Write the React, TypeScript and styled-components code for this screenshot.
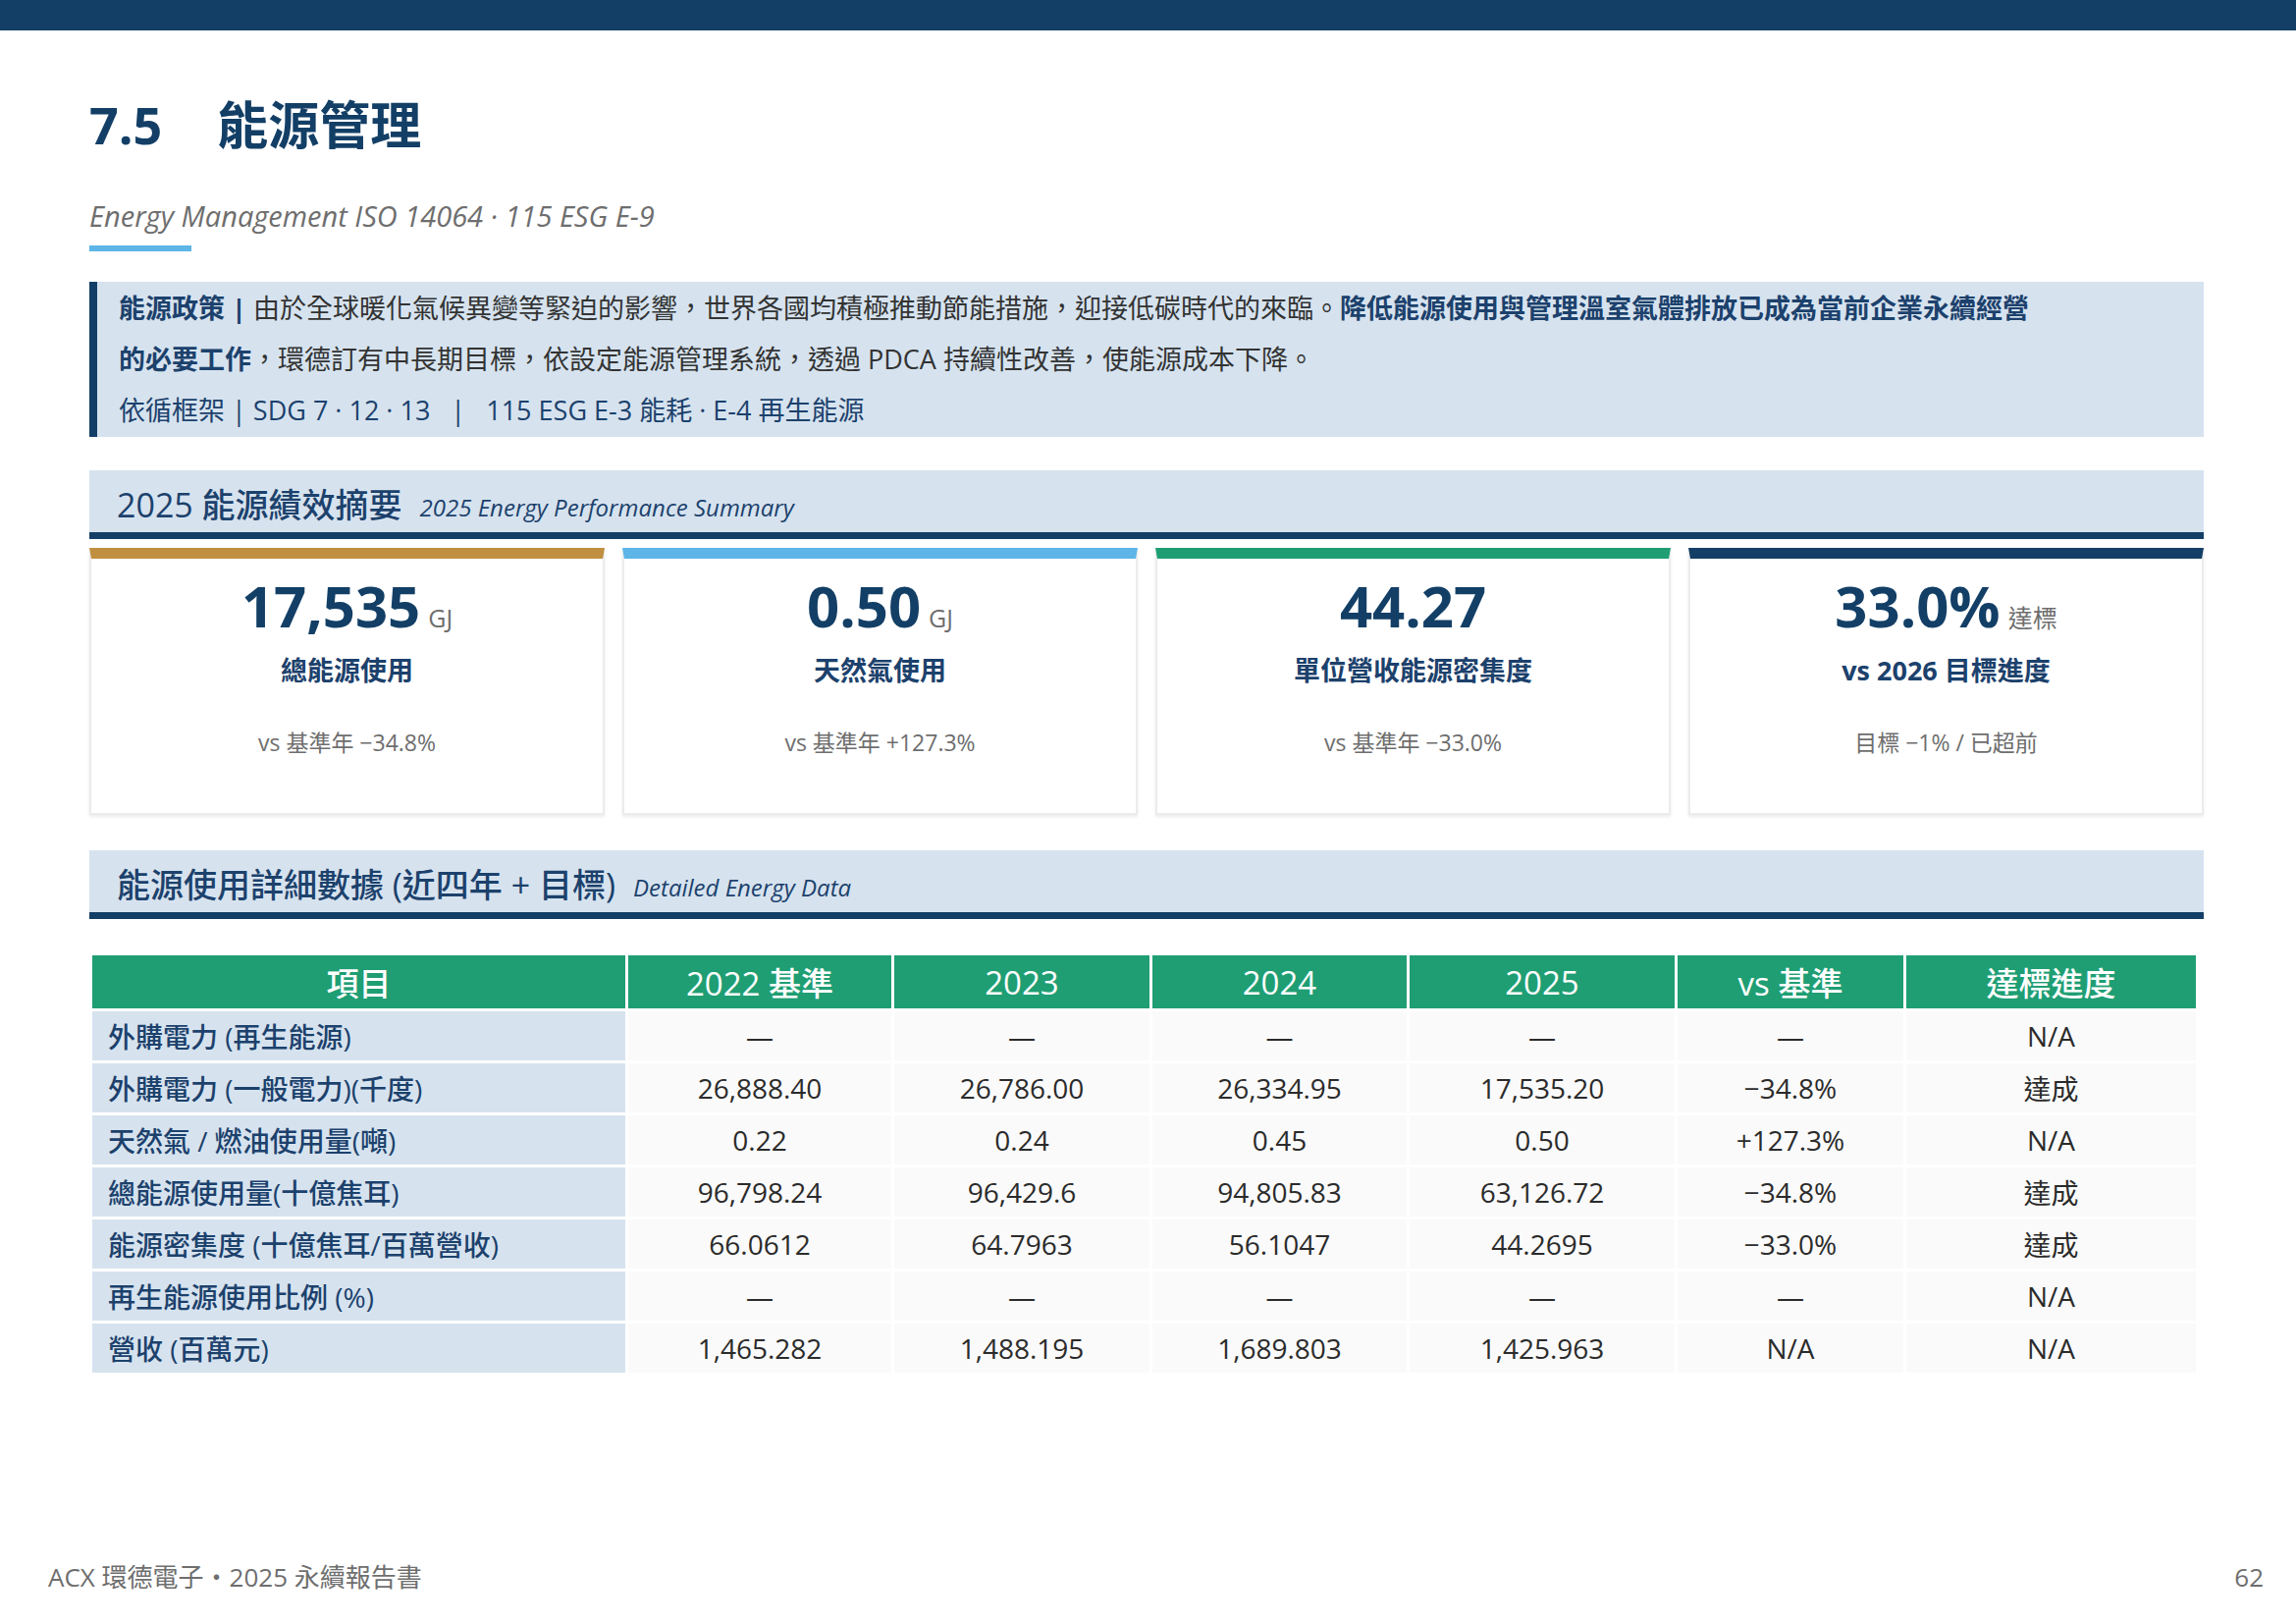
import React from 'react';
import styled, { createGlobalStyle } from 'styled-components';

const Colors = {
    navy: '#133f66',
    navyText: '#1c416c',
    paleBlue: '#d6e3ef',
    green: '#1f9e74',
    sky: '#5db5e8',
    gold: '#c08f3f',
    gray: '#6e6e6e',
    text: '#2b2b2b',
};

const font = `"Open Sans", "Noto Sans CJK TC", sans-serif`;

const GlobalStyle = createGlobalStyle`
    html, body { margin: 0; padding: 0; background: #fff; }
    body { font-family: ${font}; color: ${Colors.text}; }
`;

const Page = styled.div`
    width: 2339px;
    min-height: 1654px;
    display: flex;
    flex-direction: column;
    box-sizing: border-box;
`;

const TopBar = styled.div`
    height: 31px;
    background: ${Colors.navy};
`;

const Content = styled.div`
    padding: 0 94px 0 91px;
    display: flex;
    flex-direction: column;
`;

const Title = styled.h1`
    margin: 65px 0 0;
    font-size: 52px;
    line-height: 62px;
    font-weight: 700;
    color: ${Colors.navy};
    display: flex;
    gap: 56px;
`;

const Subtitle = styled.div`
    margin-top: 44px;
    font-size: 29px;
    line-height: 36px;
    font-style: italic;
    color: ${Colors.gray};
`;

const Accent = styled.div`
    margin-top: 12px;
    width: 104px;
    height: 6px;
    background: ${Colors.sky};
`;

const Policy = styled.div`
    margin-top: 31px;
    background: ${Colors.paleBlue};
    border-left: 8px solid ${Colors.navy};
    padding: 1px 20px 1px 22px;
    font-size: 27px;
    line-height: 52px;
    color: #333;
    white-space: nowrap;
`;

const Strong = styled.span`
    font-weight: 700;
    color: ${Colors.navyText};
`;

const Ref = styled.span`
    color: ${Colors.navyText};
`;

const SectionHead = styled.div<{ $top: number }>`
    margin-top: ${(p) => p.$top}px;
    height: 70px;
    box-sizing: border-box;
    background: ${Colors.paleBlue};
    border-bottom: 7px solid ${Colors.navy};
    display: flex;
    align-items: flex-end;
    gap: 18px;
    padding: 0 0 8px 28px;
    color: ${Colors.navyText};
`;

const SectionTitle = styled.span`
    font-size: 34px;
    line-height: 40px;
    font-weight: 500;
`;

const SectionSub = styled.span`
    font-size: 24px;
    line-height: 34px;
    font-style: italic;
`;

const Cards = styled.div`
    margin-top: 9px;
    display: grid;
    grid-template-columns: repeat(4, 1fr);
    gap: 18px;
`;

const Card = styled.div<{ $accent: string }>`
    height: 272px;
    box-sizing: border-box;
    border: 2px solid #ececec;
    border-top: 11px solid ${(p) => p.$accent};
    box-shadow: 0 2px 3px rgba(0, 0, 0, 0.08);
    display: flex;
    flex-direction: column;
    align-items: center;
    padding-top: 16px;
`;

const Big = styled.div`
    height: 64px;
    display: flex;
    align-items: baseline;
    gap: 8px;
    font-size: 58px;
    line-height: 64px;
    font-weight: 700;
    color: ${Colors.navy};
`;

const Unit = styled.span`
    font-size: 25px;
    line-height: 30px;
    font-weight: 400;
    color: ${Colors.gray};
`;

const CardLabel = styled.div`
    margin-top: 16px;
    font-size: 27px;
    line-height: 36px;
    font-weight: 700;
    color: ${Colors.navyText};
`;

const CardNote = styled.div`
    margin-top: 40px;
    font-size: 23px;
    line-height: 30px;
    color: ${Colors.gray};
`;

const Table = styled.div`
    margin: 37px 0 0 3px;
    width: 2143px;
    display: grid;
    grid-template-columns: 543px 268px 260px 259px 270px 230px 295px;
    column-gap: 3px;
`;

const Th = styled.div`
    height: 54px;
    background: ${Colors.green};
    color: #fff;
    font-size: 33px;
    font-weight: 500;
    display: flex;
    align-items: center;
    justify-content: center;
    margin-bottom: 3px;
`;

const Td = styled.div<{ $first?: boolean }>`
    height: 50px;
    margin-bottom: 3px;
    display: flex;
    align-items: center;
    justify-content: ${(p) => (p.$first ? 'flex-start' : 'center')};
    padding-left: ${(p) => (p.$first ? '16px' : '0')};
    background: ${(p) => (p.$first ? Colors.paleBlue : '#fafafa')};
    color: ${(p) => (p.$first ? Colors.navyText : Colors.text)};
    font-size: 28px;
    font-weight: ${(p) => (p.$first ? 500 : 400)};
`;

const Footer = styled.div`
    margin-top: auto;
    padding: 0 33px 30px 49px;
    display: flex;
    justify-content: space-between;
    font-size: 26px;
    line-height: 36px;
    color: ${Colors.gray};
`;

const cards = [
    { accent: Colors.gold, value: '17,535', unit: 'GJ', label: '總能源使用', note: 'vs 基準年 −34.8%' },
    { accent: Colors.sky, value: '0.50', unit: 'GJ', label: '天然氣使用', note: 'vs 基準年 +127.3%' },
    { accent: Colors.green, value: '44.27', unit: '', label: '單位營收能源密集度', note: 'vs 基準年 −33.0%' },
    { accent: Colors.navy, value: '33.0%', unit: '達標', label: 'vs 2026 目標進度', note: '目標 −1% / 已超前' },
];

const head = ['項目', '2022 基準', '2023', '2024', '2025', 'vs 基準', '達標進度'];

const rows = [
    ['外購電力 (再生能源)', '—', '—', '—', '—', '—', 'N/A'],
    ['外購電力 (一般電力)(千度)', '26,888.40', '26,786.00', '26,334.95', '17,535.20', '−34.8%', '達成'],
    ['天然氣 / 燃油使用量(噸)', '0.22', '0.24', '0.45', '0.50', '+127.3%', 'N/A'],
    ['總能源使用量(十億焦耳)', '96,798.24', '96,429.6', '94,805.83', '63,126.72', '−34.8%', '達成'],
    ['能源密集度 (十億焦耳/百萬營收)', '66.0612', '64.7963', '56.1047', '44.2695', '−33.0%', '達成'],
    ['再生能源使用比例 (%)', '—', '—', '—', '—', '—', 'N/A'],
    ['營收 (百萬元)', '1,465.282', '1,488.195', '1,689.803', '1,425.963', 'N/A', 'N/A'],
];

const App = () => (
    <Page>
        <GlobalStyle />
        <TopBar />
        <Content>
            <Title>
                <span>7.5</span>
                <span>能源管理</span>
            </Title>
            <Subtitle>Energy Management ISO 14064 · 115 ESG E-9</Subtitle>
            <Accent />
            <Policy>
                <Strong>能源政策 | </Strong>
                由於全球暖化氣候異變等緊迫的影響，世界各國均積極推動節能措施，迎接低碳時代的來臨。
                <Strong>降低能源使用與管理溫室氣體排放已成為當前企業永續經營</Strong>
                <br />
                <Strong>的必要工作</Strong>
                ，環德訂有中長期目標，依設定能源管理系統，透過 PDCA 持續性改善，使能源成本下降。
                <br />
                <Ref>依循框架 | SDG 7 · 12 · 13 &nbsp;&nbsp;|&nbsp;&nbsp; 115 ESG E-3 能耗 · E-4 再生能源</Ref>
            </Policy>
            <SectionHead $top={34}>
                <SectionTitle>2025 能源績效摘要</SectionTitle>
                <SectionSub>2025 Energy Performance Summary</SectionSub>
            </SectionHead>
            <Cards>
                {cards.map((c) => (
                    <Card key={c.label} $accent={c.accent}>
                        <Big>
                            {c.value}
                            {c.unit && <Unit>{c.unit}</Unit>}
                        </Big>
                        <CardLabel>{c.label}</CardLabel>
                        <CardNote>{c.note}</CardNote>
                    </Card>
                ))}
            </Cards>
            <SectionHead $top={36}>
                <SectionTitle>能源使用詳細數據 (近四年 + 目標)</SectionTitle>
                <SectionSub>Detailed Energy Data</SectionSub>
            </SectionHead>
            <Table>
                {head.map((h) => (
                    <Th key={h}>{h}</Th>
                ))}
                {rows.map((r) =>
                    r.map((cell, i) => (
                        <Td key={r[0] + i} $first={i === 0}>
                            {cell}
                        </Td>
                    )),
                )}
            </Table>
        </Content>
        <Footer>
            <span>ACX 環德電子・2025 永續報告書</span>
            <span>62</span>
        </Footer>
    </Page>
);

export default App;
